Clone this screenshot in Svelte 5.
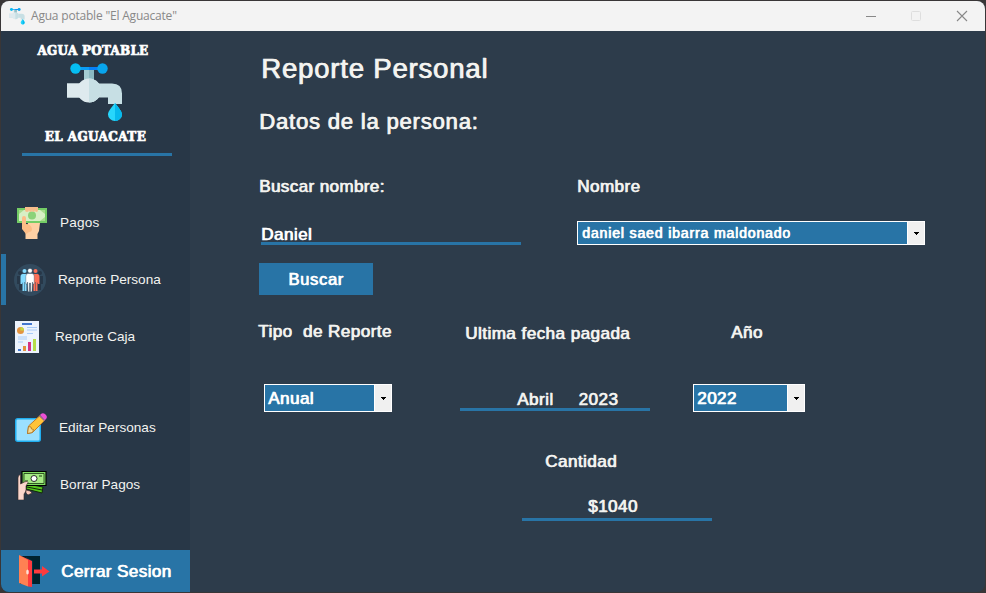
<script>
  const title = 'Agua potable "El Aguacate"';
  let search = 'Daniel';
</script>

{#snippet faucet()}
  <path d="M17 6h10v11H17z" fill="#a5cdd3" /><path d="M22 6h5v11h-5z" fill="#8bb9c2" />
  <path d="M8 4h28v3H8z" fill="#0b9cf5" />
  <path d="M22 4h14v3H22z" fill="#0780f8" />
  <circle cx="8.500" cy="5.500" r="5.200" fill="#05bdf2" /><circle cx="35.500" cy="5.500" r="5.200" fill="#08a5ee" />
  <path d="M0 20.500h45q10 0 10 10V41H41v-6.500H0z" fill="#c7dfe4" />
  <path d="M0 20.500h13v14H0z" fill="#deeaee" />
  <circle cx="22" cy="27.500" r="12" fill="#deeaee" />
  <path d="M22 15.500a12 12 0 0 1 0 24z" fill="#c7dfe4" />
  <path d="M48 40c3 4 7 8 7 11.500a7 6.500 0 0 1-14 0C41 48 45 44 48 40z" fill="#27d6fc" />
  <path d="M48 40c3 4 7 8 7 11.500a7 6.500 0 0 1-7 6.500z" fill="#06b9ed" />
{/snippet}

{#snippet combo(value, cls)}
  <div class="combo {cls}">
    <span>{value}</span>
    <button aria-label="Abrir lista">
      <svg width="5" height="3" viewBox="0 0 5 3" shape-rendering="crispEdges"><path d="M0 0h5v1H4v1H3v1H2V2H1V1H0z" fill="#000" /></svg>
    </button>
  </div>
{/snippet}

<div class="desktop">
  <div class="window">
    <header>
      <svg class="app-icon" width="16" height="17" viewBox="0 0 56 60">{@render faucet()}</svg>
      <span class="title">{title}</span>
      <svg class="controls" width="104" height="12" viewBox="0 0 104 12" fill="none">
        <path d="M0 6.500h10" stroke="#888" />
        <rect x="45.500" y="1.500" width="9" height="9" rx="1" stroke="#dedede" />
        <path d="M91 1l10 10M101 1L91 11" stroke="#888" stroke-width="1.100" />
      </svg>
    </header>
    <div class="body">
      <aside>
        <div class="logo">
          <span class="brand top">AGUA POTABLE</span>
          <svg width="56" height="60" viewBox="0 0 56 60">{@render faucet()}</svg>
          <span class="brand bottom">EL AGUACATE</span>
          <i></i>
        </div>
        <nav>
          <button class="item">
            <svg width="32" height="34" viewBox="0 0 32 34">
              <path d="M1 2h30v15H1z" fill="#74cc66" /><path d="M3 4h26v11H3z" fill="#d8efc5" />
              <path d="M3 4h5L3 8zM24 4h5v4zM29 11v4h-5z" fill="#a8dc8d" />
              <circle cx="16" cy="9.500" r="4" fill="#8bd279" />
              <path d="M12 17h12l-1 8-1.500 3v5H9.500v-6z" fill="#ffd0a4" />
              <path d="M6 12q0-2 2-2t2 2v6q5 0 6 5 0 3-3 3l-3 2-4-5z" fill="#fdbd87" />
              <path d="M9 1h13v3q0 2-1.500 2T19 4q0 2-1.500 2T16 4q0 2-1.500 2T13 4q0 2-2 2T9 4z" fill="#f7bd8b" />
            </svg>
            <span class="m1">Pagos</span>
          </button>
          <button class="item active">
            <svg width="32" height="32" viewBox="0 0 32 32">
              <circle cx="16" cy="16" r="16" fill="#324a5e" />
              <g fill="#273748"><circle cx="6" cy="9" r="2" /><path d="M3 12h6v14H5v-6H3z" /><circle cx="26" cy="9" r="2" /><path d="M23 12h6v8h-2v6h-4z" /></g>
              <g fill="#84dbff"><circle cx="10.500" cy="7" r="2" /><path d="M8.500 10h4v17H11v-9h-.500v9H8.500v-9l-.500 2H6.500v-7.500q0-2.500 2-2.500z" /></g>
              <g fill="#fd7058"><circle cx="21.500" cy="7" r="2" /><path d="M19.500 10h4q2 0 2 2.500V20H24l-.500-2v9h-2v-9H21v9h-1.500z" /></g>
              <g fill="#fff" stroke="#324a5e" stroke-width=".4"><circle cx="16" cy="6.700" r="2.300" /><path d="M14 9.500h4q2.200 0 2.200 3V20H19l-.600-2-.400 9.700h-1.500V19h-1v8.700H14L13.600 18l-.600 2h-1.200v-7.500q0-3 2.200-3z" /></g>
            </svg>
            <span class="m2">Reporte Persona</span>
          </button>
          <button class="item">
            <svg width="24" height="32" viewBox="0 0 24 32">
              <path d="M0 0h24v32H0z" fill="#ecf3fd" /><path d="M7 2h10v2H7z" fill="#4277cf" />
              <circle cx="5.500" cy="9.500" r="3.500" fill="#e39440" /><path d="M5.500 9.500V6A3.500 3.500 0 0 1 9 9.500z" fill="#c2d943" />
              <path d="M12 6.500h10M12 9h10M12 12.500h6M3 16h9M3 18h9M3 21h5" stroke="#a9ccf8" />
              <path d="M3 28h3v2H3z" fill="#4277cf" /><path d="M8 25h3v5H8z" fill="#e39440" /><path d="M13 21h3v9h-3z" fill="#d63282" /><path d="M18 18h3v12h-3z" fill="#b6dc48" />
            </svg>
            <span class="m3">Reporte Caja</span>
          </button>
          <button class="item second">
            <svg width="32" height="29" viewBox="0 0 32 29">
              <rect x=".75" y="5.750" width="24.500" height="22.500" rx="2" fill="#9be0ff" stroke="#20aef0" stroke-width="1.500" />
              <path d="M12.500 20.500l1-7.500L24.500 3l5 4.500-12 12z" fill="#ffc33a" stroke="#bd7d2c" /><path d="M12.500 20.500l1-7 2.500.5.500 2 2 .500-1 3z" fill="#f5db93" stroke="#a77127" stroke-width=".8" />
              <path d="M25 2l1-1q2-1.500 4.500.500T31 6l-1.500 1.500z" fill="#ec50d6" /><path d="M24 3l1-1 5 5-1 1z" fill="#9a6a8e" />
            </svg>
            <span class="m4">Editar Personas</span>
          </button>
          <button class="item">
            <svg width="30" height="30" viewBox="0 0 30 30">
              <path d="M10 14l16 3-1 6-16-4z" fill="#54c51b" stroke="#10270b" /><path d="M10 17l15 3" stroke="#10270b" />
              <path d="M5 1.500h24v14H5z" fill="#83dc64" stroke="#000" stroke-width="1.200" /><path d="M7 3.500h20v10H7z" fill="#a5e983" stroke="#183711" stroke-width=".8" />
              <circle cx="17" cy="8.500" r="3" fill="#fff" stroke="#000" stroke-width=".8" /><path d="M22 6h3M8 11h3" stroke="#183711" />
              <path d="M1 30V8q0-3 2.500-3.500V14l4-2q3-1.500 3.500.500L9 16v5l-2 3v6z" fill="#fbd6cc" stroke="#352925" stroke-width=".6" /><path d="M9 20l4 1 2 2-4 2-2-2z" fill="#fbc7bb" stroke="#352925" stroke-width=".6" />
            </svg>
            <span class="m5">Borrar Pagos</span>
          </button>
        </nav>
        <button class="logout">
          <svg width="31" height="33" viewBox="0 0 31 33">
            <path d="M1 1h20v28H1z" fill="#00232e" /><path d="M7 2l7 4v23H7z" fill="#023744" /><path d="M0 0l13 6v26l-4-.5V6z" fill="#fd3b3e" /><path d="M0 0l9 5v26.500L0 28z" fill="#ff8153" />
            <ellipse cx="8.500" cy="17" rx="1.300" ry="2.500" fill="#ffe1d6" /><path d="M15 14.500h8V11l7.500 5.500-7.500 5v-3h-8z" fill="#fd3b3e" />
          </svg>
          <span class="strong">Cerrar Sesion</span>
        </button>
      </aside>
      <main>
        <h1 class="strong">Reporte Personal</h1>
        <h2 class="strong">Datos de la persona:</h2>
        <section class="person">
          <div class="finder">
            <label class="strong" for="search">Buscar nombre:</label>
            <input id="search" class="strong" bind:value={search} />
            <button class="search strong">Buscar</button>
          </div>
          <div class="names">
            <span class="strong">Nombre</span>
            {@render combo('daniel saed ibarra maldonado', 'wide')}
          </div>
        </section>
        <section class="report">
          <div class="kind">
            <span class="strong">Tipo&nbsp; de Reporte</span>
            {@render combo('Anual', 'type')}
          </div>
          <div class="paid">
            <span class="strong">Ultima fecha pagada</span>
            <div class="value strong"><span>Abril</span><span>2023</span></div>
          </div>
          <div class="year">
            <span class="strong">Año</span>
            {@render combo('2022', 'years')}
          </div>
        </section>
        <section class="amount">
          <span class="strong">Cantidad</span>
          <div class="value strong">$1040</div>
        </section>
      </main>
    </div>
  </div>
</div>

<style>
  :global(body) { overflow: hidden; }
  * { box-sizing: border-box; }
  .desktop { width: 986px; height: 593px; padding: 1px; background: #393637; font: 17px/20px "Liberation Sans", Arial, sans-serif; color: #f3f3f0; }
  .window { height: 591px; border-radius: 8px; overflow: hidden; background: #2d3c4b; }
  button { border: 0; padding: 0; margin: 0; font: inherit; color: inherit; }
  .strong, .combo span { letter-spacing: .48px; text-shadow: .7px 0 currentColor; -webkit-text-stroke: .3px currentColor; white-space: nowrap; }

  header { height: 30px; background: #f3f3f3; display: flex; align-items: center; padding-left: 8px; color: #888; }
  .app-icon { margin-right: 6px; }
  .title { font: 12px/16px "Open Sans", "Noto Sans", sans-serif; letter-spacing: -.2px; }
  .controls { margin-left: auto; margin-right: 15px; }
  .body { display: flex; height: 561px; }

  aside { width: 189px; background: #283747; display: flex; flex-direction: column; }
  .logo { height: 125px; padding-top: 12px; display: flex; flex-direction: column; align-items: center; }
  .logo svg { margin: 5px 0 0 -2px; }
  .brand { font: bold 12px/15px "DejaVu Serif", serif; color: #fff; white-space: nowrap; -webkit-text-stroke: .7px #fff; letter-spacing: .25px; }
  .brand.top { margin-left: -5px; }
  .brand.bottom { margin-top: 7px; letter-spacing: .4px; }
  .logo i { width: 150px; height: 3px; background: #2874a6; margin-top: 8px; margin-left: 3px; }
  .brand.top { padding-top: 1px; height: 15px; }

  nav { display: flex; flex-direction: column; gap: 6px; margin-top: 41px; }
  .item { height: 51px; background: none; display: flex; align-items: center; font-size: 13.6px; padding-left: 14px; white-space: nowrap; }
  .item svg { flex: none; }
  .item:first-child { padding-left: 15px; }
  .item:last-child { padding-left: 16px; }
  .active { border-left: 5px solid #2874a6; padding-left: 8px; }
  .second { margin-top: 34px; }
  .m1 { margin-left: 12px; letter-spacing: .2px; }
  .m2, .m4 { margin-left: 12px; }
  .m3 { margin-left: 16px; }
  .m5 { margin-left: 13px; }
  .logout { height: 42px; margin-top: auto; background: #2874a6; display: flex; align-items: center; padding-left: 18px; gap: 11px; color: #fff; }
  .logout span { padding-top: 1px; letter-spacing: .42px; }

  main { flex: 1; padding-left: 69px; }
  h1 { font-size: 27.5px; line-height: 32px; font-weight: normal; margin: 22px 0 0 2px; }
  h2 { font-size: 22px; line-height: 26px; font-weight: normal; margin: 24px 0 0; }
  h1.strong, h2.strong { letter-spacing: .82px; }

  .person { display: flex; margin-top: 42px; height: 118px; }
  .finder { width: 318px; display: flex; flex-direction: column; align-items: flex-start; }
  .finder label { letter-spacing: .4px; }
  .finder input { width: 260px; height: 21px; margin: 27px 0 0 2px; padding: 4px 0 0; border: 0; border-bottom: 3px solid #2874a6; background: none; color: #fff; font: 17px/14px "Liberation Sans", Arial, sans-serif; outline: 0; }
  .search { width: 114px; height: 32px; background: #2874a6; margin-top: 18px; color: #fff; font-size: 16.5px; }
  .search.strong { letter-spacing: .7px; }
  .names { display: flex; flex-direction: column; }

  .combo { display: flex; align-items: center; border: 1px solid #fff; background: #2874a6; color: #fff; padding-left: 3px; }
  .combo span { flex: 1; padding-top: 1px; }
  .combo button { width: 17px; height: 100%; background: #f0f0f0; border-left: 1px solid #fff; display: grid; place-items: center; }
  .wide { width: 348px; height: 24px; margin-top: 24px; font-size: 14px; padding-left: 4px; }
  .wide span { letter-spacing: .87px; padding-top: 0; }

  .report { display: flex; height: 91px; margin: 26px 0 0 -1px; }
  .kind { width: 202px; padding-top: 1px; display: flex; flex-direction: column; }
  .type { width: 128px; height: 28px; margin: 42px 0 0 6px; }
  .paid { width: 233px; padding-top: 3px; }
  .paid > span { margin-left: 5px; }
  .value { border-bottom: 3px solid #2874a6; width: 190px; display: flex; }
  .paid .value { height: 24px; margin-top: 43px; padding: 3px 0 0 57px; gap: 25px; }
  .year { padding-top: 2px; display: flex; flex-direction: column; }
  .year > span { margin-left: 38px; }
  .years { width: 112px; height: 28px; margin-top: 41px; }

  .amount { margin: 40px 0 0 263px; display: flex; flex-direction: column; }
  .amount > span { margin-left: 23px; }
  .amount .value { height: 25px; margin-top: 24px; padding: 1px 0 0 66px; }
</style>
